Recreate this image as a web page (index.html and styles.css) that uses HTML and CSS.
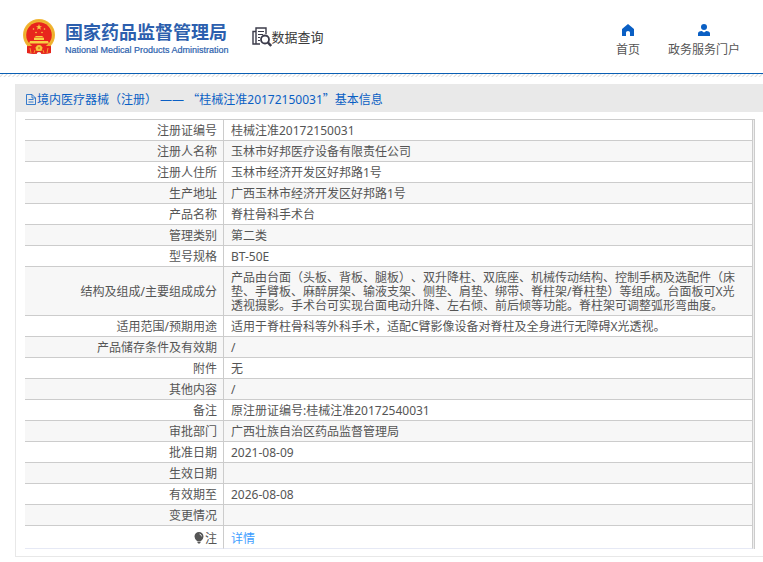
FILE: index.html
```
<!DOCTYPE html>
<html lang="zh-CN">
<head>
    <meta charset="UTF-8" />
    <meta name="viewport" content="width=device-width, initial-scale=1.0">
    <title>国家药品监督管理局 - 数据查询</title>
    <link rel="stylesheet" href="styles.css">
</head>
<body>
    <header>
        <a class="logo" href="#">
            <svg class="emblem" viewBox="0 0 32 36" aria-hidden="true">
                <path fill="#d9251c" d="M4 24 L28 24 L28 34 L21 35 L16 33 L11 35 L4 34 Z" />
                <circle cx="16" cy="16" r="16" fill="#f2b632" />
                <circle cx="16" cy="16" r="14.6" fill="none" stroke="#e0a52a" stroke-width="0.5" />
                <circle cx="16" cy="16" r="12.8" fill="#e8251d" />
                <path fill="#f8cf45" d="M16 5 L16.8 7.2 L19 7.2 L17.2 8.6 L17.9 10.8 L16 9.5 L14.1 10.8 L14.8 8.6 L13 7.2 L15.2 7.2 Z" />
                <g fill="#f8cf45">
                    <circle cx="10.5" cy="10" r="0.8" />
                    <circle cx="21.5" cy="10" r="0.8" />
                    <circle cx="13" cy="13.5" r="0.8" />
                    <circle cx="19" cy="13.5" r="0.8" />
                    <path d="M11 18.5 L13 17 L19 17 L21 18.5 Z" />
                    <path d="M11 19 H21 V21 H11 Z" />
                    <path d="M7 22 H25 L26 24.5 H6 Z" />
                </g>
                <path fill="#e8251d" d="M5 27 L12 27 L14 35 L4 34 Z M27 27 L20 27 L18 35 L28 34 Z" />
                <circle cx="16" cy="29" r="3" fill="#f6c83c" />
                <circle cx="16" cy="29" r="1.2" fill="#d9921c" />
                <path fill="none" stroke="#f2b632" stroke-width="0.8" d="M7 29 L8 34 M25 29 L24 34 M12 31 L11 34 M20 31 L21 34" />
            </svg>
            <span class="logo-text">
                <span class="logo-cn">国家药品监督管理局</span>
                <span class="logo-en">National Medical Products Administration</span>
            </span>
        </a>
        <a class="query" href="#">
            <svg viewBox="0 0 20 20" aria-hidden="true" fill="none" stroke="#3b3b4a">
                <path stroke-width="1.4" d="M14 7 V1 H4 V17 H8 M4 4.5 H1 V17 H4" />
                <path stroke-width="1" d="M6 4.5 H12 M6 7.5 H11 M6 10.5 H8 M6 13.5 H8" />
                <circle cx="13" cy="12.5" r="4" stroke-width="1.8" />
                <path stroke-width="2.4" d="M16 15.6 L19.2 19" />
            </svg>
            <span>数据查询</span>
        </a>
        <nav>
            <a href="#">
                <svg viewBox="0 0 12 12" aria-hidden="true">
                    <path fill="#0a5fc4" d="M6 0 L12 5 V11.4 Q12 12 11.4 12 H8 V8.6 Q8 7 6 7 Q4 7 4 8.6 V12 H0.6 Q0 12 0 11.4 V5 Z" />
                </svg>
                <span>首页</span>
            </a>
            <a href="#">
                <svg viewBox="0 0 12 12" aria-hidden="true">
                    <circle cx="6" cy="3" r="3" fill="#0a5fc4" />
                    <path fill="#0a5fc4" d="M0 12 V9.6 Q0 7.4 3.8 7 L6 8.6 L8.2 7 Q12 7.4 12 9.6 V12 Z" />
                </svg>
                <span>政务服务门户</span>
            </a>
        </nav>
    </header>
    <div class="hatch"></div>
    <main class="panel">
        <h1>
            <svg viewBox="0 0 10 11" aria-hidden="true" fill="none" stroke="#0a5fc4">
                <path d="M0.5 0.5 H6 L9.5 4 V10.5 H0.5 Z M6 0.5 V4 H9.5 M2.5 5.5 H7.5 M2.5 8 H7.5" stroke-width="0.8" />
            </svg>
            <span>境内医疗器械（注册） —— <span class="quote">“</span>桂械注准20172150031<span class="quote">”</span>基本信息</span>
        </h1>
        <div class="table-wrap">
            <table>
                <tbody>
                    <tr><th scope="row">注册证编号</th><td>桂械注准20172150031</td></tr>
                    <tr><th scope="row">注册人名称</th><td>玉林市好邦医疗设备有限责任公司</td></tr>
                    <tr><th scope="row">注册人住所</th><td>玉林市经济开发区好邦路1号</td></tr>
                    <tr><th scope="row">生产地址</th><td>广西玉林市经济开发区好邦路1号</td></tr>
                    <tr><th scope="row">产品名称</th><td>脊柱骨科手术台</td></tr>
                    <tr><th scope="row">管理类别</th><td>第二类</td></tr>
                    <tr><th scope="row">型号规格</th><td>BT-50E</td></tr>
                    <tr><th scope="row">结构及组成/主要组成成分</th><td>产品由台面（头板、背板、腿板）、双升降柱、双底座、机械传动结构、控制手柄及选配件（床垫、手臂板、麻醉屏架、输液支架、侧垫、肩垫、绑带、脊柱架/脊柱垫）等组成。台面板可X光透视摄影。手术台可实现台面电动升降、左右倾、前后倾等功能。脊柱架可调整弧形弯曲度。</td></tr>
                    <tr><th scope="row">适用范围/预期用途</th><td>适用于脊柱骨科等外科手术，适配C臂影像设备对脊柱及全身进行无障碍X光透视。</td></tr>
                    <tr><th scope="row">产品储存条件及有效期</th><td>/</td></tr>
                    <tr><th scope="row">附件</th><td>无</td></tr>
                    <tr><th scope="row">其他内容</th><td>/</td></tr>
                    <tr><th scope="row">备注</th><td>原注册证编号:桂械注准20172540031</td></tr>
                    <tr><th scope="row">审批部门</th><td>广西壮族自治区药品监督管理局</td></tr>
                    <tr><th scope="row">批准日期</th><td>2021-08-09</td></tr>
                    <tr><th scope="row">生效日期</th><td></td></tr>
                    <tr><th scope="row">有效期至</th><td>2026-08-08</td></tr>
                    <tr><th scope="row">变更情况</th><td></td></tr>
                    <tr class="note">
                        <th scope="row"><svg viewBox="0 0 10 12" aria-hidden="true"><path fill="#555" d="M5 0 A4.5 4.5 0 0 1 9.5 4.5 Q9.5 7 7 9 H3 Q0.5 7 0.5 4.5 A4.5 4.5 0 0 1 5 0 Z M3.4 9.6 H6.6 V10.6 L5.8 11.6 H4.2 L3.4 10.6 Z" /><path fill="none" stroke="#fff" stroke-width="0.8" d="M5.5 2 Q7.4 2.4 7.6 4.4" /></svg>注</th>
                        <td><a href="#">详情</a></td>
                    </tr>
                </tbody>
            </table>
        </div>
    </main>
</body>
</html>
```
FILE: styles.css
```
* {
    margin: 0;
    padding: 0;
    box-sizing: border-box;
}

body {
    background-color: #fff;
    color: #555;
    font-family: "Noto Sans", "Noto Sans CJK SC", sans-serif;
    font-size: 12px;
    line-height: 14px;
    text-spacing-trim: space-all;
}

a {
    color: inherit;
    text-decoration: none;
}

header {
    display: flex;
    align-items: center;
    height: 74px;
    padding: 0 23px;
    border-bottom: 1px solid #0a5fb4;
}

.logo {
    display: flex;
    align-items: center;
    gap: 10px;
    color: #2c5fae;
}

.emblem {
    width: 32px;
    height: 36px;
}

.logo-text {
    display: flex;
    flex-direction: column;
    gap: 2px;
    padding-top: 4px;
    white-space: nowrap;
}

.logo-cn {
    font-size: 18px;
    line-height: 20px;
    font-weight: bold;
}

.logo-en {
    font-family: "Liberation Sans", sans-serif;
    font-size: 9px;
    line-height: 12px;
    -webkit-text-stroke: 0.2px #2c5fae;
}

.query {
    display: flex;
    align-items: center;
    margin-left: 23px;
    color: #3a3a3a;
    font-size: 13px;
    white-space: nowrap;
}

.query svg {
    width: 20px;
    height: 20px;
}

nav {
    display: flex;
    gap: 28px;
    margin-left: auto;
    padding-top: 8px;
}

nav a {
    display: flex;
    flex-direction: column;
    align-items: center;
    gap: 7px;
    white-space: nowrap;
}

nav svg {
    width: 12px;
    height: 12px;
}

.hatch {
    height: 3px;
    background: repeating-linear-gradient(135deg, #fff 0, #fff 1px, #ddd 2px, #fff 3px);
}

.panel {
    margin: 7px 0 5px 15px;
    padding-bottom: 7px;
    border-left: 1px solid #e8e8e8;
    border-bottom: 1px solid #e8e8e8;
}

h1 {
    display: flex;
    align-items: center;
    height: 28px;
    padding: 2px 0 0 10px;
    background-color: #e9e9e9;
    color: #0a5fc4;
    font-size: 12px;
    font-weight: normal;
    white-space: nowrap;
}

h1 svg {
    width: 10px;
    height: 11px;
    margin-right: 1px;
}

.quote {
    font-family: "Noto Sans CJK SC", sans-serif;
}

.table-wrap {
    margin: 7px 8px 0 9px;
    padding-right: 1px;
    border-top: 1px solid #ccc;
    border-right: 1px solid #ccc;
    background-color: #eee;
}

table {
    width: 100%;
    border-collapse: separate;
    border-spacing: 0;
    background-color: #fff;
}

th,
td {
    height: 21px;
    padding: 4px 6px 2px;
    border-right: 1px solid #ccc;
    border-bottom: 1px solid #ccc;
    font-weight: normal;
    vertical-align: middle;
}

th {
    width: 199px;
    text-align: right;
}

td {
    padding-right: 16px;
    padding-left: 7px;
    text-align: left;
}

tr:nth-child(even) {
    background-color: #f7f7f7;
}

.note th,
.note td {
    height: 23px;
    padding-top: 6px;
    border-bottom-color: #e6e9f5;
}

.note svg {
    width: 10px;
    height: 12px;
    margin-right: 1px;
    vertical-align: -1px;
}

.note a {
    color: #409eff;
}
```
